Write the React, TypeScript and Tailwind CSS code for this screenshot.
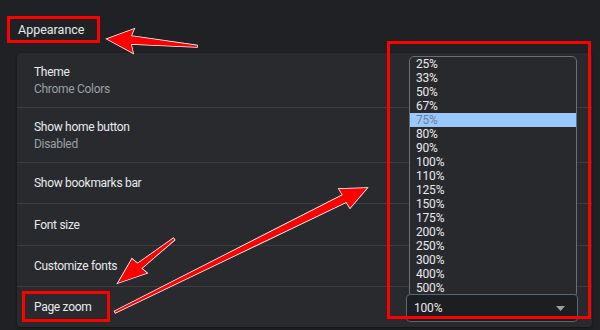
import React from "react";

const zooms = ["25%", "33%", "50%", "67%", "75%", "80%", "90%", "100%", "110%", "125%", "150%", "175%", "200%", "250%", "300%", "400%", "500%"];

function Row({ title, sub, h, last }: { title: string; sub?: string; h: string; last?: boolean }) {
  return (
    <div className={`${h} flex flex-col justify-center pl-[17px] ${last ? "" : "border-b border-[#3c3d40]"}`}>
      <div className="text-[12px] leading-[16px] tracking-[-0.3px] text-[#e8eaed]">{title}</div>
      {sub && <div className="text-[12px] leading-[16px] tracking-[-0.3px] text-[#9aa0a6] mt-[1px]">{sub}</div>}
    </div>
  );
}

export default function App() {
  return (
    <div
      className="relative w-[600px] h-[330px] overflow-hidden bg-[#202124]"
      style={{ fontFamily: "Roboto, 'Liberation Sans', sans-serif" }}
    >
      <div className="h-[53px] pl-[18px] pt-[22px]">
        <div className="text-[12.5px] leading-[16px] text-[#e8eaed]">Appearance</div>
      </div>
      <div className="ml-[17px] w-[575px] h-[274px] rounded-[4px] bg-[#292a2d] flex flex-col shadow-[0_1px_3px_rgba(0,0,0,0.5)]">
        <Row title="Theme" sub="Chrome Colors" h="h-[55px]" />
        <Row title="Show home button" sub="Disabled" h="h-[55px]" />
        <Row title="Show bookmarks bar" h="h-[41px]" />
        <Row title="Font size" h="h-[42px]" />
        <Row title="Customize fonts" h="h-[41px]" />
        <Row title="Page zoom" h="h-[40px]" last />
      </div>

      {/* open dropdown list */}
      <div className="absolute left-[409px] top-[56px] w-[168px] h-[241px] bg-[#28292c] border border-[#6b6e73] rounded-t-[5px] rounded-b-[4px] overflow-hidden">
        {zooms.map((z, i) => (
          <div
            key={z}
            className={`h-[14px] leading-[14px] pl-[6px] text-[12px] tracking-[-0.2px] ${i === 4 ? "bg-[#99c8ff] text-[#6f7f92]" : "text-[#e8eaed]"}`}
          >
            {z}
          </div>
        ))}
      </div>

      {/* select box */}
      <div className="absolute left-[406px] top-[294px] w-[172px] h-[28px] bg-[#1d1e21] border border-[#56647c] rounded-[4px] flex items-center justify-between pl-[7px] pr-[12px]">
        <span className="text-[12px] tracking-[-0.2px] text-[#e8eaed]">100%</span>
        <svg width="9" height="5" viewBox="0 0 9 5">
          <polygon points="0,0 9,0 4.5,5" fill="#9aa0a6" />
        </svg>
      </div>

      {/* red boxes */}
      <div className="absolute left-[7px] top-[16px] w-[93px] h-[27px] border-[3px] border-[#ff0000]" />
      <div className="absolute left-[387px] top-[41px] w-[204px] h-[278px] border-[3px] border-[#ff0000]" />
      <div className="absolute left-[22px] top-[291px] w-[88px] h-[31px] border-[3px] border-[#ff0000]" />

      {/* arrows */}
      <svg className="absolute left-0 top-0" width="600" height="330" viewBox="0 0 600 330">
        <g fill="#ff0000" stroke="#ffffff" strokeWidth="1.5" strokeLinejoin="miter" style={{ paintOrder: "stroke" }}>
          <polygon points="107,39 134,29 131,36 197,45.5 197,47 131,44 133,53" />
          <polygon points="118,283 132,259 137.6,263.6 173.4,238.2 174.6,239.8 141.4,268.4 147,273" />
          <polygon points="367,188 339,189 342.7,194.9 114.6,311.3 115.4,312.7 346.3,202.1 350,208" />
        </g>
      </svg>
    </div>
  );
}
